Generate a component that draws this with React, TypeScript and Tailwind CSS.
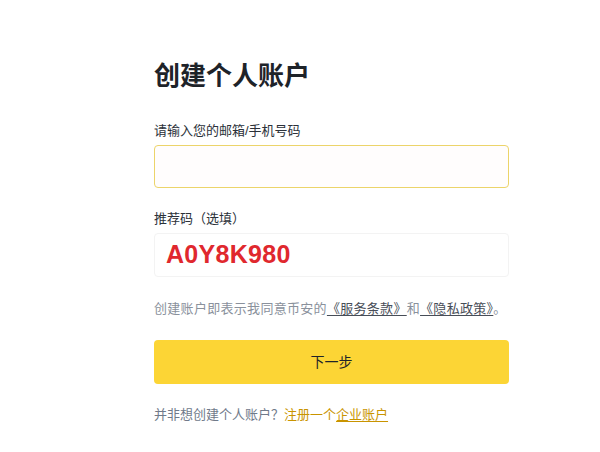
export default function App() {
    return (
        <div className="w-[600px] h-[452px] bg-white overflow-hidden font-['Liberation_Sans','Noto_Sans_CJK_SC',sans-serif]">
            <div className="ml-[154px] w-[355px] pt-[58px] flex flex-col">
                {/* Title */}
                <h1 className="text-[26px] leading-[36px] font-bold text-[#1e2329]">创建个人账户</h1>

                {/* Email / phone */}
                <label className="mt-[28px] text-[13px] leading-[18px] text-[#2b3139]">请输入您的邮箱/手机号码</label>
                <div className="mt-[5px] h-[43px] border border-[#ecd46a] rounded-[4px] bg-[#fffdfd]" />

                {/* Referral code */}
                <label className="mt-[22px] text-[13px] leading-[18px] text-[#2b3139]">推荐码（选填）</label>
                <div className="mt-[5px] h-[44px] border border-[#f3f3f3] rounded-[4px] flex items-center pl-[11px]">
                    <span className="text-[25px] font-bold text-[#e0282e] tracking-[0.3px]">A0Y8K980</span>
                </div>

                {/* Terms */}
                <p className="mt-[23px] text-[13px] leading-[18px] text-[#8a919c] tracking-[0.3px]">
                    创建账户即表示我同意币安的
                    <span className="underline underline-offset-2 text-[#474d57]">《服务条款》</span>和
                    <span className="underline underline-offset-2 text-[#474d57]">《隐私政策》</span>。
                </p>

                {/* Next */}
                <button className="mt-[22px] h-[44px] rounded-[4px] bg-[#fcd535] text-[14px] text-[#1e2329]">
                    下一步
                </button>

                {/* Enterprise */}
                <p className="mt-[22px] text-[13px] leading-[18px] text-[#707a8a]">
                    并非想创建个人账户？<span className="text-[#c99400]">注册一个<span className="underline underline-offset-2">企业账户</span></span>
                </p>
            </div>
        </div>
    );
}
